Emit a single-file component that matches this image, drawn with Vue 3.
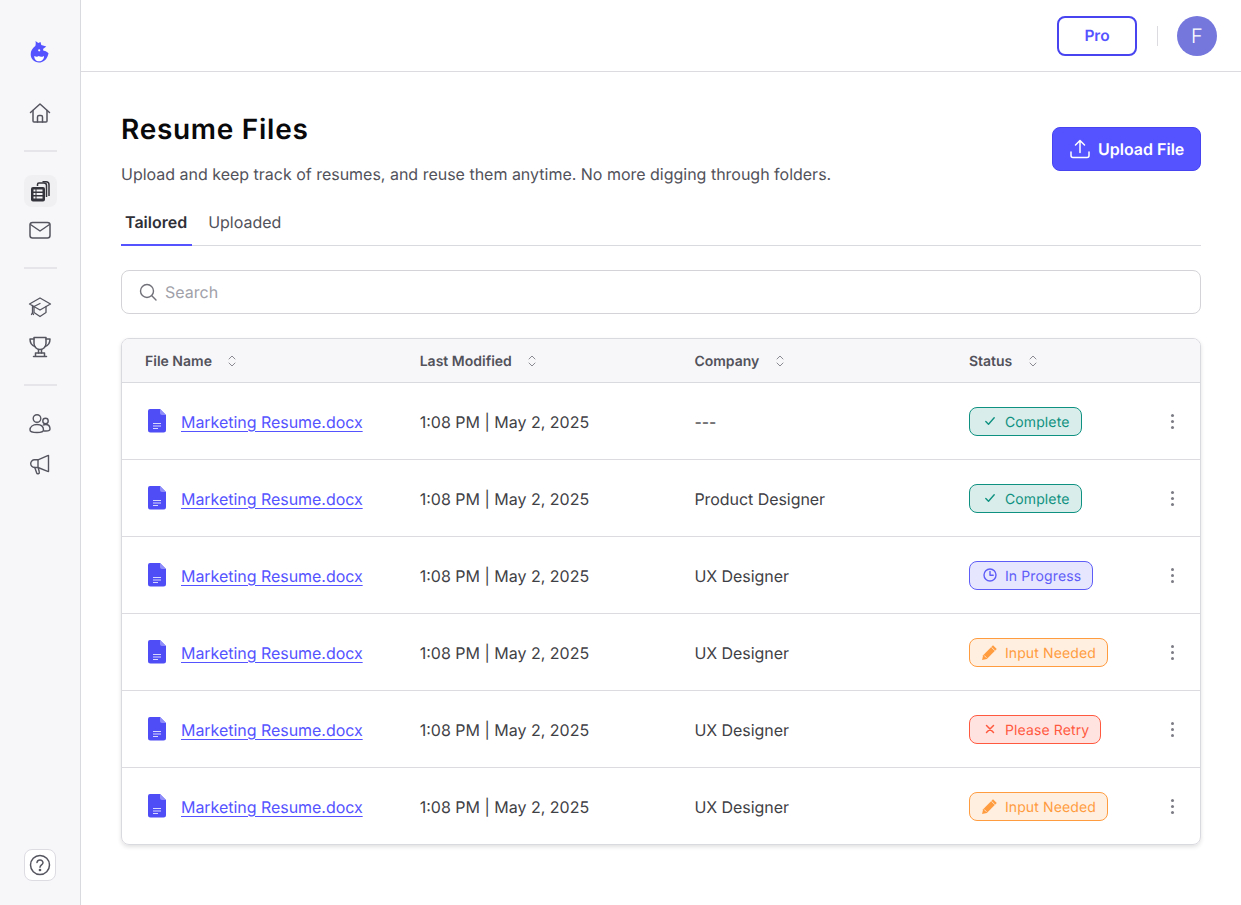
<script setup>
const base = { name: 'Marketing Resume.docx', time: '1:08 PM | May 2, 2025' }
const rows = [
  { ...base, company: '---', status: 'Complete', kind: 'ok' },
  { ...base, company: 'Product Designer', status: 'Complete', kind: 'ok' },
  { ...base, company: 'UX Designer', status: 'In Progress', kind: 'prog' },
  { ...base, company: 'UX Designer', status: 'Input Needed', kind: 'input' },
  { ...base, company: 'UX Designer', status: 'Please Retry', kind: 'retry' },
  { ...base, company: 'UX Designer', status: 'Input Needed', kind: 'input' }
]
const cols = ['File Name', 'Last Modified', 'Company', 'Status']
</script>

<template>
  <div class="app">
    <aside class="side">
      <svg class="logo" width="24" height="26" viewBox="0 0 24 26">
        <path fill="#5553ff" d="M7.500 1l2.800 2 2.200-1 .8 3 5 1.500-3.300 2.500c.3.600.4 1.200.4 1.800 2.800.3 4.100 1.300 5.100 2.500-.2 1.300-.6 2.400-1 3.200-1.500 3.500-4.500 6-8.500 6-4.900 0-8.300-3.600-8.300-8.200 0-3.400 1.700-6.200 4.600-8.300.5-1.300.6-3 .2-5z"/>
        <path fill="#fff" d="M6.300 16c1.700 1 3.200 1 4.500.1 1.400 1 3.300 1 5.200-.1.300 2.900-2.100 5.300-5 5.300-2.800 0-5-2.400-4.700-5.300z"/>
        <circle cx="11.200" cy="10.300" r="1.100" fill="#fff"/>
      </svg>
      <svg class="ic home" width="24" height="24" viewBox="0 0 24 24" fill="none" stroke="#555560" stroke-width="1.500" stroke-linejoin="round" stroke-linecap="round">
        <path d="M2.500 11.500L12 3l9.500 8.500"/>
        <path d="M5 9.500V20a1 1 0 0 0 1 1h12a1 1 0 0 0 1-1V9.500"/>
        <path d="M9.500 21v-5a1.500 1.500 0 0 1 1.500-1.500h2a1.500 1.500 0 0 1 1.500 1.500v5"/>
      </svg>
      <div class="sep first"></div>
      <div class="active">
        <svg width="22" height="22" viewBox="0 0 22 22">
          <path fill="none" stroke="#34343c" stroke-width="1.500" d="M13.500 1.800H17a3 3 0 0 1 3 3V16"/>
          <path fill="none" stroke="#34343c" stroke-width="1.500" d="M8.500 6V4.500A1.500 1.500 0 0 1 10 3h5A2.500 2.500 0 0 1 17.500 5.500V17"/>
          <rect x="2" y="7" width="14" height="14.500" rx="2" fill="#34343c"/>
          <g fill="#f4f4f6">
            <rect x="4.500" y="9.500" width="2" height="2"/><rect x="7.500" y="9.500" width="6" height="2"/>
            <rect x="4.500" y="13" width="2" height="2"/><rect x="7.500" y="13" width="6" height="2"/>
            <rect x="4.500" y="16.500" width="2" height="2"/><rect x="7.500" y="16.500" width="6" height="2"/>
          </g>
        </svg>
      </div>
      <svg class="ic mail" width="24" height="24" viewBox="0 0 24 24" fill="none" stroke="#555560" stroke-width="1.500" stroke-linejoin="round" stroke-linecap="round">
        <rect x="2" y="4.500" width="20" height="15.500" rx="2.500"/>
        <path d="M2.500 6.500L12 13l9.500-6.500"/>
      </svg>
      <div class="sep second"></div>
      <svg class="ic cap" width="24" height="24" viewBox="0 0 24 24" fill="none" stroke="#555560" stroke-width="1.300" stroke-linejoin="round" stroke-linecap="round">
        <path d="M12 3L22.500 9 12 15 1.500 9z"/>
        <path d="M6 11.500v6L12 21.500l6-4v-6"/>
        <path d="M4.500 10.500v7M3.500 19.500l1-2 1 2"/>
        <path d="M5 12l7-3.500"/>
      </svg>
      <svg class="ic cup" width="24" height="24" viewBox="0 0 24 24" fill="none" stroke="#555560" stroke-width="1.500" stroke-linejoin="round" stroke-linecap="round">
        <path d="M6 2.500h12v6a6 6 0 0 1-12 0z"/>
        <path d="M6 4H2c0 4 1.500 6.500 5 7.500M18 4h4c0 4-1.500 6.500-5 7.500"/>
        <path d="M10.500 14.500V18M13.500 14.500V18"/>
        <path d="M7.500 18h9v3.500h-9zM5.500 21.500h13"/>
      </svg>
      <div class="sep third"></div>
      <svg class="ic people" width="24" height="24" viewBox="0 0 24 24" fill="none" stroke="#555560" stroke-width="1.400" stroke-linejoin="round">
        <circle cx="9" cy="6.500" r="3.800"/>
        <circle cx="17.500" cy="9" r="2.700"/>
        <path d="M2 18c0-3.500 3-5.500 7-5.500s6.500 2 6.500 5.500c0 1.500-1 2.500-6.500 2.500S2 19.500 2 18z"/>
        <path d="M15 13.200c.8-.5 1.700-.7 2.700-.7 2.700 0 4.300 1.700 4.300 4.500 0 1.300-1 2-4 2h-2.300"/>
      </svg>
      <svg class="ic horn" width="24" height="24" viewBox="0 0 24 24" fill="none" stroke="#555560" stroke-width="1.400" stroke-linejoin="round" stroke-linecap="round">
        <path d="M20.500 3.500v16l-.8-.2L10 15.500H6.500A3.800 3.800 0 0 1 2.700 11.600 3.800 3.800 0 0 1 6.500 7.800H10L19.700 3.700z"/>
        <path d="M10 7.800v7.700M6.800 15.500l1.800 5.300a1.400 1.400 0 0 0 2.700-.8l-1-4"/>
      </svg>
      <div class="help">
        <svg width="22" height="22" viewBox="0 0 22 22" fill="none" stroke="#555560" stroke-width="1.500" stroke-linecap="round">
          <circle cx="11" cy="11" r="9.500"/>
          <path d="M8 8.500A3 3 0 0 1 11 6a2.900 2.900 0 0 1 3 2.800c0 2-3 2.300-3 4.400"/>
          <circle cx="11" cy="16" r=".6" fill="#555560"/>
        </svg>
      </div>
    </aside>

    <div class="main">
      <header class="top">
        <button class="pro">Pro</button>
        <span class="vr"></span>
        <span class="avatar">F</span>
      </header>

      <main class="content">
        <div class="head">
          <div>
            <h1>Resume Files</h1>
            <p>Upload and keep track of resumes, and reuse them anytime. No more digging through folders.</p>
          </div>
          <button class="upload">
            <svg width="20" height="20" viewBox="0 0 20 20" fill="none" stroke="#fff" stroke-width="1.500" stroke-linecap="round" stroke-linejoin="round">
              <path d="M10 13.500V1.500M5.500 6L10 1.500 14.500 6"/>
              <path d="M1 13v3.500A2 2 0 0 0 3 18.500h14a2 2 0 0 0 2-2V13"/>
            </svg>
            Upload File
          </button>
        </div>

        <nav class="tabs">
          <span class="tab on">Tailored</span>
          <span class="tab">Uploaded</span>
        </nav>

        <label class="search">
          <svg width="20" height="20" viewBox="0 0 20 20" fill="none" stroke="#71717a" stroke-width="1.400" stroke-linecap="round">
            <circle cx="9" cy="9" r="6.500"/>
            <path d="M13.800 13.800L18 18"/>
          </svg>
          <span>Search</span>
        </label>

        <section class="table">
          <div class="row hdr">
            <div v-for="c in cols" :key="c" class="cell">
              <span class="htxt">{{ c }}</span>
              <svg class="sort" width="10" height="14" viewBox="0 0 10 14" fill="none" stroke="#8a8a92" stroke-width="1" stroke-linecap="round" stroke-linejoin="round">
                <path d="M2 5l3-3 3 3M2 9l3 3 3-3"/>
              </svg>
            </div>
          </div>
          <div v-for="(r, i) in rows" :key="i" class="row item">
            <div class="cell file">
              <svg width="20" height="26" viewBox="0 0 20 26">
                <path fill="#4f4df5" d="M3 1h10l6 6v15a2.500 2.500 0 0 1-2.500 2.500h-13A2.500 2.500 0 0 1 1 22V3a2 2 0 0 1 2-2z"/>
                <path fill="#8f8dfa" d="M13 1l6 6h-4a2 2 0 0 1-2-2z"/>
                <path stroke="#d8d8ff" stroke-width="1" d="M6 15.500h8M6 18h8M6 20.500h5"/>
              </svg>
              <a class="txt">{{ r.name }}</a>
            </div>
            <div class="cell"><span class="txt">{{ r.time }}</span></div>
            <div class="cell"><span class="txt co">{{ r.company }}</span></div>
            <div class="cell">
              <span class="badge" :class="r.kind">
                <svg v-if="r.kind === 'ok'" width="14" height="14" viewBox="0 0 14 14" fill="none" stroke="currentColor" stroke-width="1.400" stroke-linecap="round" stroke-linejoin="round"><path d="M2.800 7.500l2.700 2.700 5.700-6.400"/></svg>
                <svg v-else-if="r.kind === 'prog'" width="14" height="14" viewBox="0 0 14 14" fill="none" stroke="currentColor" stroke-width="1.400" stroke-linecap="round" stroke-linejoin="round"><circle cx="7" cy="7" r="6"/><path d="M7 3.500V7.300h3.200"/></svg>
                <svg v-else-if="r.kind === 'input'" width="17" height="17" viewBox="0 0 16 16"><path fill="currentColor" d="M11.300 1.200l3.500 3.500L5.500 14 1 15l1-4.500z"/><path stroke="#ffefe0" stroke-width=".8" d="M3 10.800l2.200 2.200M9.800 3l3.200 3.200"/></svg>
                <svg v-else width="14" height="14" viewBox="0 0 14 14" fill="none" stroke="currentColor" stroke-width="1.500" stroke-linecap="round"><path d="M3.500 3.500l7 7M10.500 3.500l-7 7"/></svg>
                <span class="label">{{ r.status }}</span>
              </span>
              <span class="kebab"><i></i><i></i><i></i></span>
            </div>
          </div>
        </section>
      </main>
    </div>
  </div>
</template>

<style scoped>
.app {
  display: flex;
  width: 1241px;
  height: 905px;
  overflow: hidden;
  background: #fff;
  font-family: Inter, "Liberation Sans", sans-serif;
  text-rendering: geometricPrecision;
  color: #3a3a42;
}
.side {
  width: 81px;
  box-sizing: border-box;
  flex: none;
  background: #f7f7fa;
  border-right: 1px solid #d9d9e0;
  display: flex;
  flex-direction: column;
  align-items: center;
  height: 905px;
}
.logo { margin-top: 39.500px; }
.ic { display: block; flex: none; }
.home { margin-top: 35.500px; }
.sep { width: 33px; height: 2px; background: #e6e6ea; flex: none; }
.first { margin-top: 25px; }
.active {
  width: 33px;
  height: 32px;
  margin-top: 23px;
  border-radius: 8px;
  background: #f0f0f2;
  display: flex;
  align-items: center;
  justify-content: center;
  flex: none;
}
.mail { margin-top: 11px; }
.second { margin-top: 25px; }
.cap { margin-top: 26px; }
.cup { margin-top: 16px; }
.third { margin-top: 25px; }
.people { margin-top: 26px; }
.horn { margin-top: 16px; }
.help {
  margin-top: auto;
  margin-bottom: 24px;
  width: 32px;
  height: 32px;
  box-sizing: border-box;
  border: 1px solid #dcdce2;
  border-radius: 8px;
  background: #fff;
  display: flex;
  align-items: center;
  justify-content: center;
}
.main { flex: 1; min-width: 0; }
.top {
  height: 72px;
  box-sizing: border-box;
  border-bottom: 1px solid #dcdce0;
  display: flex;
  align-items: center;
  justify-content: flex-end;
  padding: 0 24px 0 0;
}
.pro {
  width: 80px;
  height: 40px;
  box-sizing: border-box;
  border: 2px solid #4845f0;
  border-radius: 8px;
  background: #fff;
  color: #5553ff;
  font-family: inherit;
  font-size: 15.500px;
  font-weight: 600;
  text-rendering: geometricPrecision;
  padding: 0;
}
.vr { width: 1px; height: 20px; background: #dcdce0; margin: 0 19px 0 20px; }
.avatar {
  width: 40px;
  height: 40px;
  border-radius: 50%;
  background: #7577dd;
  color: #fff;
  font-size: 20px;
  font-weight: 300;
  display: flex;
  align-items: center;
  justify-content: center;
}
.content { padding: 0 40px; }
.head {
  display: flex;
  justify-content: space-between;
  align-items: flex-start;
  padding-top: 40px;
}
h1 {
  margin: 0;
  font-size: 28px;
  line-height: 34px;
  font-weight: 600;
  letter-spacing: .72px;
  color: #09090b;
}
.head p {
  margin: 16px 0 0;
  font-size: 16px;
  line-height: 24px;
  letter-spacing: -.01px;
  color: #52525b;
}
.upload {
  margin-top: 15px;
  width: 149px;
  height: 44px;
  border: 1px solid #4845f0;
  border-radius: 8px;
  background: #5553ff;
  color: #fff;
  font-family: inherit;
  font-size: 16px;
  font-weight: 600;
  text-rendering: geometricPrecision;
  display: flex;
  align-items: center;
  gap: 8px;
  padding: 0 0 0 17px;
}
.tabs {
  margin-top: 15px;
  height: 45px;
  box-sizing: border-box;
  border-bottom: 1px solid #d9d9e0;
  display: flex;
}
.tab {
  box-sizing: border-box;
  height: 45px;
  padding: 9px 4px 0;
  margin-right: 8px;
  font-size: 16px;
  line-height: 24px;
  color: #52525b;
}
.tab.on {
  font-weight: 600;
  color: #2f2f37;
  border-bottom: 2px solid #5553ff;
  padding-right: 5px;
  margin-right: 12px;
}
.search {
  margin-top: 24px;
  height: 44px;
  box-sizing: border-box;
  border: 1px solid #d4d4d8;
  border-radius: 8px;
  display: flex;
  align-items: center;
  gap: 7px;
  padding-left: 16px;
  font-size: 16px;
  color: #a1a1aa;
}
.table {
  margin-top: 24px;
  border: 1px solid #d9d9e0;
  border-radius: 8px;
  overflow: hidden;
  box-shadow: 0 2px 4px rgba(0, 0, 0, .12);
}
.row {
  display: grid;
  grid-template-columns: 274.7px 274.7px 274.5px 1fr;
  align-items: center;
}
.hdr {
  height: 44px;
  box-sizing: border-box;
  background: #f7f7f9;
  border-bottom: 1px solid #d9d9e0;
  font-size: 14px;
  font-weight: 600;
  color: #52525b;
}
.hdr .cell { gap: 15.500px; }
.htxt { padding-top: 2px; }
.item {
  height: 77px;
  box-sizing: border-box;
  border-bottom: 1px solid #dcdce0;
  font-size: 16px;
  color: #3f3f46;
}
.item:last-child { border-bottom: 0; height: 76px; }
.cell {
  display: flex;
  align-items: center;
  padding-left: 23px;
  position: relative;
  min-width: 0;
}
.txt { padding-top: 1px; }
.co { letter-spacing: -.05px; }
.file { gap: 14px; padding-left: 25px; }
.file svg { flex: none; }
a {
  color: #5553ff;
  text-decoration: underline;
  text-underline-offset: 3px;
  text-decoration-thickness: 1px;
  letter-spacing: -.04px;
  white-space: nowrap;
}
.badge {
  height: 29px;
  box-sizing: border-box;
  border: 1px solid;
  border-radius: 8px;
  display: inline-flex;
  align-items: center;
  font-size: 14px;
  line-height: 20px;
  padding: 0 11px 0 13px;
}
.badge svg { flex: none; margin-right: 8px; }
.label { white-space: nowrap; padding-top: 3px; letter-spacing: .13px; }
.ok { background: #d9edea; border-color: #0f9181; color: #0f9181; }
.prog { background: #e6e6ff; border-color: #5f5df7; color: #5f5df7; }
.input { background: #ffefe0; border-color: #ff9c40; color: #ff9c40; padding-left: 12px; }
.input svg { margin-right: 7px; margin-left: -1px; }
.retry { background: #ffe3e0; border-color: #ff5a40; color: #ff5a40; }
.kebab {
  position: absolute;
  left: 225.500px;
  top: 50%;
  transform: translateY(calc(-50% + .5px));
  display: flex;
  flex-direction: column;
  gap: 3px;
}
.kebab i {
  display: block;
  width: 3px;
  height: 3px;
  border-radius: 50%;
  background: #7c7c85;
}
</style>

<style>
html, body { margin: 0; background: #fff; }
</style>
